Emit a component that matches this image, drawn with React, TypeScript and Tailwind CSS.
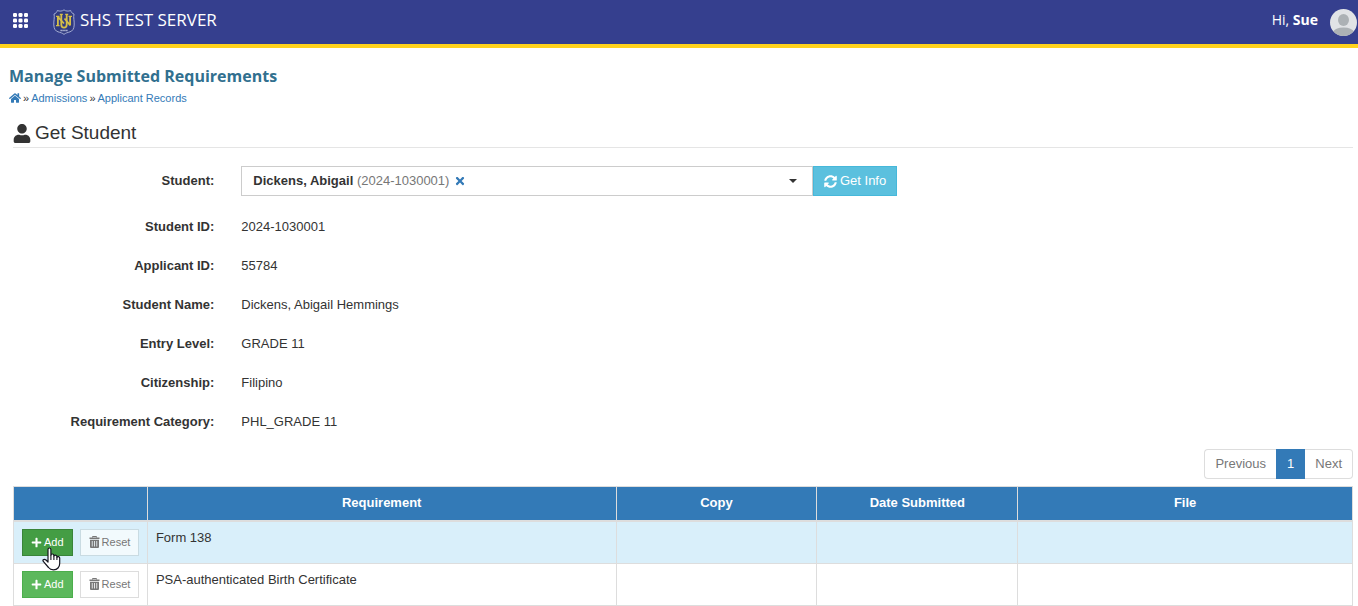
import { useState } from "react";
import { FaHome, FaUser, FaSyncAlt, FaTimes, FaPlus } from "react-icons/fa";

const details = [
  { label: "Student ID:", value: "2024-1030001" },
  { label: "Applicant ID:", value: "55784" },
  { label: "Student Name:", value: "Dickens, Abigail Hemmings" },
  { label: "Entry Level:", value: "GRADE 11" },
  { label: "Citizenship:", value: "Filipino" },
  { label: "Requirement Category:", value: "PHL_GRADE 11" },
];

const requirements = ["Form 138", "PSA-authenticated Birth Certificate"];

const Logo = () => (
  <svg viewBox="0 0 22 26" className="h-[26px] w-[22px]" aria-hidden="true">
    <path
      d="M11 .8C9.600 2.300 6.500 2.500 4.300 1.500C4 3.300 2.500 4.600 1 5C1.900 8.500.5 12 .8 16C1 20 2.500 22 5 22.800C7.500 23.600 9.500 24 11 25.400C12.500 24 14.500 23.600 17 22.800C19.500 22 21 20 21.200 16C21.500 12 20.100 8.500 21 5C19.500 4.600 18 3.300 17.700 1.500C15.500 2.500 12.400 2.300 11 .8Z"
      fill="#303a80"
      stroke="#a3abd3"
      strokeWidth="1"
    />
    <g fill="none" stroke="#d6bf48" strokeWidth="1.800">
      <path d="M4.900 7.500V16.500M17.100 7.500V16.500M4.900 7.800L11 14.500" />
      <path d="M8.300 5.500V15.500Q8.300 18.600 11 18.600Q13.700 18.600 13.700 15.500V5.500" />
      <path d="M11.500 9.500L17.100 16.200" />
      <path d="M3 7.300H6.500M3 16.700H6.500M15.500 7.300H19M6.800 5.300H9.800M12.200 5.300H15.200" strokeWidth="1.200" />
    </g>
    <path d="M7.500 21.500H14.500" stroke="#c5cae3" strokeWidth="1.500" strokeDasharray="1.300 .6" />
  </svg>
);

const TrashIcon = () => (
  <svg viewBox="0 0 11 12" className="h-3 w-[11px]" aria-hidden="true">
    <path d="M3.500 1.500V.5h4v1" fill="none" stroke="currentColor" />
    <path d="M.5 1.500h10V3H.5z" fill="currentColor" />
    <path
      fillRule="evenodd"
      d="M1 3.700h9V11q0 1-1 1H2q-1 0-1-1zM2.800 5v5.500h.8V5zM5.100 5v5.500h.8V5zM7.400 5v5.500h.8V5z"
      fill="currentColor"
    />
  </svg>
);

const Pointer = () => (
  <svg
    viewBox="0 0 19 24"
    className="pointer-events-none absolute left-5 top-[18px] z-10 h-6 w-[19px]"
    aria-hidden="true"
  >
    <path
      d="M6 15V2.500Q6 1 7.400 1T8.900 2.500V8.500Q9 7 10.400 7T11.900 8.600V9.500Q12.200 8 13.500 8.200T14.900 9.700V10.500Q15.300 9.300 16.500 9.600T17.700 11V16.500Q17.700 19 16 21Q14.500 22.800 11.500 22.800Q8.300 22.800 6.500 20.500L1.500 14.700Q.5 13.500 1.300 12.700Q2.400 11.700 4 13Z"
      fill="white"
      stroke="#14141f"
      strokeWidth="1.200"
      strokeLinejoin="round"
    />
    <path d="M8.900 8.500V13M11.900 9.500V13M14.900 10.500V13" stroke="#14141f" strokeWidth="1.100" />
  </svg>
);

const Header = () => (
  <header className="flex h-12 items-center justify-between border-b-4 border-[#ffd21c] bg-[#353f8e] pl-[13px] font-['Open_Sans',sans-serif] text-white">
    <div className="flex items-center">
      <button aria-label="Apps" className="mr-[25px] pb-1">
        <svg viewBox="0 0 15 15" className="h-[15px] w-[15px]" fill="white">
          {[0, 5.5, 11].map((y) =>
            [0, 5.5, 11].map((x) => (
              <rect key={`${x}-${y}`} x={x} y={y} width="4" height="4" rx="1.300" />
            ))
          )}
        </svg>
      </button>
      <Logo />
      <span className="ml-[5px] pb-1 text-[17px] leading-6">SHS TEST SERVER</span>
    </div>
    <div className="flex items-center gap-3 pr-px">
      <span className="pb-1 text-[14px] leading-5">
        Hi, <b>Sue</b>
      </span>
      <svg viewBox="0 0 27 27" className="h-[27px] w-[27px]" aria-hidden="true">
        <clipPath id="avatar">
          <circle cx="13.500" cy="13.500" r="13.500" />
        </clipPath>
        <g clipPath="url(#avatar)">
          <rect width="27" height="27" fill="#e1e3e6" />
          <ellipse cx="13.500" cy="11" rx="5.500" ry="6" fill="#acb1b5" />
          <path d="M3 27V23Q5 18.500 13.500 18.500T24 23V27Z" fill="#acb1b5" />
        </g>
      </svg>
    </div>
  </header>
);

const StudentPicker = () => {
  const [student, setStudent] = useState("2024-1030001");

  return (
    <div className="flex h-[30px] w-[59%]">
      <div className="relative flex flex-1 items-center border border-[#ccc] px-[11px]">
        {student && (
          <span className="text-[#777]" aria-hidden="true">
            <b className="text-[#333]">Dickens, Abigail</b> (2024-1030001)
          </span>
        )}
        <select
          id="student"
          className="absolute inset-0 h-full w-full cursor-pointer opacity-0"
          value={student}
          onChange={(e) => setStudent(e.target.value)}
        >
          <option value=""></option>
          <option value="2024-1030001">Dickens, Abigail (2024-1030001)</option>
        </select>
        {student && (
          <button
            aria-label="Clear student"
            className="relative ml-1 p-px text-[#337ab7]"
            onClick={() => setStudent("")}
          >
            <FaTimes className="h-3 w-3" />
          </button>
        )}
        <span className="ml-auto mr-1 border-x-4 border-t-4 border-x-transparent border-t-[#333]" />
      </div>
      <button className="flex items-center gap-[3px] border border-[#46b8da] bg-[#5bc0de] px-[10px] text-white">
        <FaSyncAlt className="h-[13px] w-[13px]" />
        Get Info
      </button>
    </div>
  );
};

const Pagination = () => (
  <nav className="flex justify-end text-[#777]">
    <ul className="flex h-[30px] leading-7">
      <li className="rounded-l border border-r-0 border-[#ddd]">
        <a href="#previous" className="px-[10px]">Previous</a>
      </li>
      <li className="border border-[#337ab7] bg-[#337ab7] text-white">
        <a href="#1" className="px-[10px]">1</a>
      </li>
      <li className="rounded-r border border-l-0 border-[#ddd]">
        <a href="#next" className="px-[10px]">Next</a>
      </li>
    </ul>
  </nav>
);

const RequirementTable = () => (
  <table className="mt-[7px] w-full table-fixed border-collapse border border-[#ddd]">
    <thead>
      <tr className="h-[34px] border-b-2 border-[#ddd] bg-[#337ab7] text-white">
        <th className="w-[10%] border-x border-[#ddd]" aria-label="Actions"></th>
        <th className="w-[35%] border-x border-[#ddd]">Requirement</th>
        <th className="w-[15%] border-x border-[#ddd]">Copy</th>
        <th className="w-[15%] border-x border-[#ddd]">Date Submitted</th>
        <th className="w-[25%] border-x border-[#ddd]">File</th>
      </tr>
    </thead>
    <tbody>
      {requirements.map((name, index) => {
        const active = index === 0;
        return (
          <tr key={name} className={active ? "bg-[#d9effa]" : "bg-white"}>
            <td className="border border-[#ddd] px-2 py-[7px]">
              <div className="relative flex gap-[7px] text-[11px]">
                <button
                  className={`flex h-[27px] items-center gap-[2px] border px-2 text-white ${
                    active ? "border-[#398439] bg-[#449d44]" : "border-[#4cae4c] bg-[#5cb85c]"
                  }`}
                >
                  <FaPlus className="h-[11px] w-[11px]" />
                  Add
                </button>
                <button
                  className={`flex h-[27px] items-center gap-[2px] border px-2 text-[#777] ${
                    active ? "border-[#c9dbe2] bg-[#f2fafd]" : "border-[#ddd] bg-white"
                  }`}
                >
                  <TrashIcon />
                  Reset
                </button>
                {active && <Pointer />}
              </div>
            </td>
            <td className="border border-[#ddd] px-2 py-[7px] align-top">{name}</td>
            <td className="border border-[#ddd]"></td>
            <td className="border border-[#ddd]"></td>
            <td className="border border-[#ddd]"></td>
          </tr>
        );
      })}
    </tbody>
  </table>
);

const App = () => {
  return (
    <div className="bg-white font-['Liberation_Sans',Arial,sans-serif] text-[13px] leading-[18px] text-[#333]">
      <Header />
      <div className="px-[9px] pt-4">
        <h1 className="font-['Open_Sans',sans-serif] text-[16px] font-bold leading-6 text-[#31708f]">
          Manage Submitted Requirements
        </h1>
        <nav className="mt-px flex items-center gap-[2px] text-[11px] text-[#337ab7]">
          <a href="#home" aria-label="Home">
            <FaHome className="h-3 w-3" />
          </a>
          <span className="text-[#333]">»</span>
          <a href="#admissions">Admissions</a>
          <span className="text-[#333]">»</span>
          <a href="#records">Applicant Records</a>
        </nav>
      </div>
      <main className="pl-[13px] pr-[5px] pt-[14px]">
        <h2 className="flex items-center gap-1 border-b border-[#e5e5e5] pb-[2px] text-[19px] leading-6">
          <FaUser className="h-[19px] w-[18px]" />
          Get Student
        </h2>
        <div className="mt-[18px] flex items-center">
          <label htmlFor="student" className="w-1/6 pr-[22px] text-right font-bold">
            Student:
          </label>
          <div className="flex-1 pl-[5px]">
            <StudentPicker />
          </div>
        </div>
        <dl className="mb-2 mt-[11px]">
          {details.map(({ label, value }) => (
            <div key={label} className="flex h-[39px] items-center">
              <dt className="w-1/6 pr-[22px] text-right font-bold">{label}</dt>
              <dd className="flex-1 pl-[5px]">{value}</dd>
            </div>
          ))}
        </dl>
        <Pagination />
        <RequirementTable />
      </main>
    </div>
  );
};

export default App;
